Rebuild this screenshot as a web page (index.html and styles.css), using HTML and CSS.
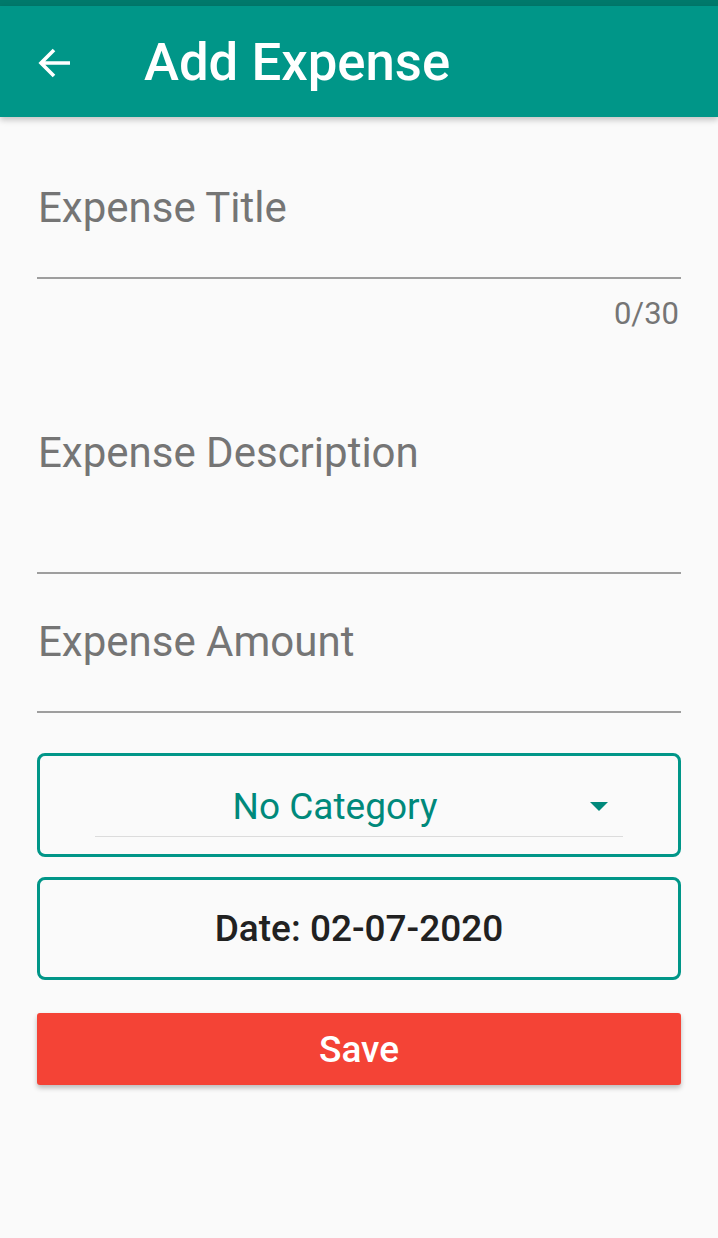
FILE: index.html
```html
<!DOCTYPE html>
<html>
<head>
<meta charset="utf-8">
<link rel="stylesheet" href="styles.css">
</head>
<body>
<div class="status"></div>
<header class="appbar">
  <svg class="back" width="34" height="32" viewBox="0 0 34 32"><path d="M32 16H4M16 3L3 16L16 29" fill="none" stroke="#fff" stroke-width="3.6"/></svg>
  <h1 class="title">Add Expense</h1>
</header>
<main class="form">
  <div class="field field-title">
    <div class="label">Expense Title</div>
    <div class="line"></div>
    <div class="counter">0/30</div>
  </div>
  <div class="field field-desc">
    <div class="label">Expense Description</div>
    <div class="line"></div>
  </div>
  <div class="field field-amount">
    <div class="label">Expense Amount</div>
    <div class="line"></div>
  </div>
  <div class="box category">
    <div class="spinner">
      <span class="cat-text">No Category</span>
      <span class="caret"></span>
    </div>
  </div>
  <div class="box date">Date: 02-07-2020</div>
  <button class="save">Save</button>
</main>
</body>
</html>
```
FILE: styles.css
```css
html, body { margin: 0; padding: 0; }
body {
  background: #fafafa;
  font-family: Roboto, "Noto Sans", sans-serif;
  width: 718px;
  height: 1238px;
  overflow: hidden;
}
.status { height: 6px; background: #00796b; }
.appbar {
  height: 111px;
  background: #009688;
  display: flex;
  align-items: center;
  box-shadow: 0 3px 6px rgba(0,0,0,0.22);
  position: relative;
}
.back { margin-left: 38px; margin-top: 2px; }
.title {
  margin: 0 0 0 72px;
  color: #fff;
  font-weight: 500;
  font-size: 52.7px;
  letter-spacing: 0;
}
.form { padding: 0 37px; display: flex; flex-direction: column; }
.field { display: flex; flex-direction: column; }
.label {
  color: #757575;
  font-size: 42px;
  line-height: 48px;
  padding-left: 1px;
}
.line { height: 2px; background: #9e9e9e; }
.field-title { padding-top: 67px; }
.field-title .line { margin-top: 45px; }
.counter {
  align-self: flex-end;
  color: #757575;
  font-size: 31px;
  line-height: 34px;
  margin-top: 18px;
  margin-right: 2px;
}
.field-desc { padding-top: 98px; }
.field-desc .line { margin-top: 95px; }
.field-amount { padding-top: 44px; }
.field-amount .line { margin-top: 45px; }
.box {
  border: 3px solid #009688;
  border-radius: 8px;
  box-sizing: border-box;
}
.category {
  margin-top: 40px;
  height: 104px;
  padding: 0 55px;
  display: flex;
  align-items: flex-start;
}
.spinner {
  flex: 1;
  height: 80px;
  border-bottom: 1px solid #dcdcdc;
  display: flex;
  align-items: center;
  justify-content: center;
  position: relative;
}
.cat-text {
  color: #00897b;
  font-size: 37px;
  margin-right: 48px;
  margin-top: 20px;
}
.caret {
  position: absolute;
  right: 15px;
  top: 46px;
  width: 0; height: 0;
  border-left: 9px solid transparent;
  border-right: 9px solid transparent;
  border-top: 9px solid #00897b;
}
.date {
  margin-top: 20px;
  height: 103px;
  display: flex;
  align-items: center;
  justify-content: center;
  color: #212121;
  font-size: 37px;
  font-weight: 500;
}
.save {
  margin-top: 33px;
  height: 72px;
  border: none;
  border-radius: 3px;
  background: #f44336;
  color: #fff;
  font-family: Roboto, "Noto Sans", sans-serif;
  font-size: 37px;
  font-weight: 500;
  box-shadow: 0 3px 5px rgba(0,0,0,0.25);
  padding: 0;
}
```
